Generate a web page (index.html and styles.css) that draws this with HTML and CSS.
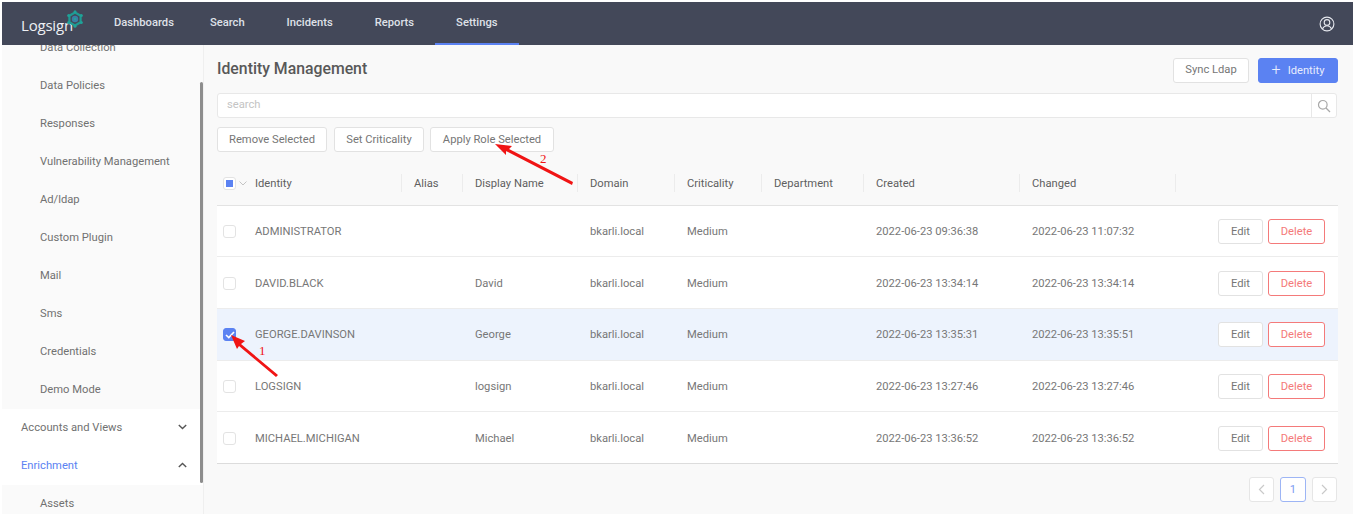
FILE: index.html
```html
<!DOCTYPE html>
<html lang="en">
<head>
<meta charset="utf-8">
<title>Identity Management</title>
<link rel="stylesheet" href="styles.css">
</head>
<body>
<div class="app">
  <header class="topbar">
    <div class="logo">
      <span class="logo-text">Logsign</span>
      <svg class="logo-mark" width="18" height="18" viewBox="0 0 18 18"><polygon points="9,2.500 14.600,5.700 14.600,12.300 9,15.500 3.400,12.300 3.400,5.700" fill="none" stroke="#1f9a92" stroke-width="2.200"/><g fill="#1fa298"><circle cx="9" cy="1.800" r="1.500"/><circle cx="15.300" cy="5.400" r="1.500"/><circle cx="15.300" cy="12.600" r="1.500"/><circle cx="9" cy="16.200" r="1.500"/><circle cx="2.700" cy="12.600" r="1.500"/><circle cx="2.700" cy="5.400" r="1.500"/></g><circle cx="9" cy="9" r="3.200" fill="#3a7ea6"/><circle cx="9" cy="9" r="1.300" fill="#1fa298"/></svg>
    </div>
    <nav class="nav">
      <a class="nav-item">Dashboards</a>
      <a class="nav-item">Search</a>
      <a class="nav-item">Incidents</a>
      <a class="nav-item">Reports</a>
      <a class="nav-item active">Settings</a>
    </nav>
    <svg class="user-icon" width="16" height="16" viewBox="0 0 16 16" fill="none" stroke="#e6e8ee" stroke-width="1.1"><circle cx="8" cy="8" r="6.9"/><circle cx="8" cy="6.400" r="2.800"/><path d="M3.400 13c1-2.300 2.700-3.300 4.600-3.300s3.600 1 4.600 3.300"/></svg>
  </header>
  <div class="body">
    <aside class="sidebar">
      <ul class="side-list">
        <li class="sub">Data Collection</li>
        <li class="sub">Data Policies</li>
        <li class="sub">Responses</li>
        <li class="sub">Vulnerability Management</li>
        <li class="sub">Ad/ldap</li>
        <li class="sub">Custom Plugin</li>
        <li class="sub">Mail</li>
        <li class="sub">Sms</li>
        <li class="sub">Credentials</li>
        <li class="sub">Demo Mode</li>
        <li class="parent">Accounts and Views
          <svg width="9" height="6" viewBox="0 0 9 6" fill="none" stroke="#555" stroke-width="1.400"><path d="M.8 1l3.700 3.500L8.200 1"/></svg></li>
        <li class="parent open">Enrichment
          <svg width="9" height="6" viewBox="0 0 9 6" fill="none" stroke="#555" stroke-width="1.400"><path d="M.8 5l3.700-3.500L8.200 5"/></svg></li>
        <li class="sub">Assets</li>
      </ul>
      <div class="scroll-thumb"></div>
    </aside>
    <main class="main">
      <div class="title-row">
        <h1 class="title">Identity Management</h1>
        <div class="title-actions">
          <button class="btn sync">Sync Ldap</button>
          <button class="btn primary"><span class="plus">+</span>Identity</button>
        </div>
      </div>
      <div class="search">
        <span class="search-input">search</span>
        <span class="search-btn"><svg width="14" height="14" viewBox="0 0 14 14" fill="none" stroke="#a8a8a8" stroke-width="1.200"><circle cx="5.800" cy="5.800" r="4.300"/><path d="M9 9l4 4"/></svg></span>
      </div>
      <div class="bulk">
        <button class="btn bulk-remove">Remove Selected</button>
        <button class="btn bulk-crit">Set Criticality</button>
        <button class="btn bulk-role">Apply Role Selected</button>
      </div>
      <table class="grid">
        <colgroup>
          <col class="c-check"><col class="c-identity"><col class="c-alias"><col class="c-display"><col class="c-domain"><col class="c-crit"><col class="c-dept"><col class="c-date"><col class="c-date"><col class="c-actions">
        </colgroup>
        <thead>
          <tr>
            <th class="check-cell"><span class="box partial"><i></i></span><svg class="caret" width="8" height="5" viewBox="0 0 8 5" fill="none" stroke="#c4c4c4"><path d="M.5.500L4 4 7.500.500"/></svg></th>
            <th>Identity</th><th>Alias</th><th>Display Name</th><th>Domain</th><th>Criticality</th><th>Department</th><th>Created</th><th>Changed</th><th></th>
          </tr>
        </thead>
        <tbody>
          <tr class="r1">
            <td class="check-cell"><span class="box"></span></td>
            <td>ADMINISTRATOR</td><td></td><td></td><td>bkarli.local</td><td>Medium</td><td></td><td>2022-06-23 09:36:38</td><td>2022-06-23 11:07:32</td>
            <td class="actions"><button class="btn small">Edit</button><button class="btn small danger">Delete</button></td>
          </tr>
          <tr class="r2">
            <td class="check-cell"><span class="box"></span></td>
            <td>DAVID.BLACK</td><td></td><td>David</td><td>bkarli.local</td><td>Medium</td><td></td><td>2022-06-23 13:34:14</td><td>2022-06-23 13:34:14</td>
            <td class="actions"><button class="btn small">Edit</button><button class="btn small danger">Delete</button></td>
          </tr>
          <tr class="r3 selected">
            <td class="check-cell"><span class="box checked"><svg width="10" height="8" viewBox="0 0 10 8" fill="none" stroke="#fff" stroke-width="1.600"><path d="M1 4l2.800 2.600L9 1"/></svg></span></td>
            <td>GEORGE.DAVINSON</td><td></td><td>George</td><td>bkarli.local</td><td>Medium</td><td></td><td>2022-06-23 13:35:31</td><td>2022-06-23 13:35:51</td>
            <td class="actions"><button class="btn small">Edit</button><button class="btn small danger">Delete</button></td>
          </tr>
          <tr class="r4">
            <td class="check-cell"><span class="box"></span></td>
            <td>LOGSIGN</td><td></td><td>logsign</td><td>bkarli.local</td><td>Medium</td><td></td><td>2022-06-23 13:27:46</td><td>2022-06-23 13:27:46</td>
            <td class="actions"><button class="btn small">Edit</button><button class="btn small danger">Delete</button></td>
          </tr>
          <tr class="r5">
            <td class="check-cell"><span class="box"></span></td>
            <td>MICHAEL.MICHIGAN</td><td></td><td>Michael</td><td>bkarli.local</td><td>Medium</td><td></td><td>2022-06-23 13:36:52</td><td>2022-06-23 13:36:52</td>
            <td class="actions"><button class="btn small">Edit</button><button class="btn small danger">Delete</button></td>
          </tr>
        </tbody>
      </table>
      <div class="pager">
        <span class="page"><svg width="7" height="11" viewBox="0 0 7 11" fill="none" stroke="#c9c9c9" stroke-width="1.200"><path d="M6 1L1.500 5.500 6 10"/></svg></span>
        <span class="page current">1</span>
        <span class="page"><svg width="7" height="11" viewBox="0 0 7 11" fill="none" stroke="#c9c9c9" stroke-width="1.200"><path d="M1 1l4.500 4.500L1 10"/></svg></span>
      </div>
    </main>
  </div>
  <svg class="annotations" width="1353" height="519" viewBox="0 0 1353 519">
    <g fill="#f01414" stroke="none">
      <polygon points="231,335 245,341 241,344 278,375 276,377 239,346 237,349"/>
      <polygon points="495,144 512,146 509,149 573,182 572,185 506,151 506,155"/>
    </g>
    <text class="anno-num" x="259" y="355">1</text>
    <text class="anno-num" x="540" y="163">2</text>
  </svg>
</div>
</body>
</html>
```
FILE: styles.css
```css
* { box-sizing: border-box; }
html, body { margin: 0; height: 100%; background: #fff; }
body { overflow: hidden; font-family: Roboto, "Liberation Sans", sans-serif; font-size: 11.2px; color: #666; }
.app { position: relative; width: 1353px; height: 519px; padding: 2px 0 5px 2px; display: flex; flex-direction: column; }
.topbar { height: 43px; flex: none; background: #434859; display: flex; align-items: center; padding-left: 19px; padding-right: 18px; position: relative; z-index: 2; }
.logo { position: relative; width: 75px; flex: none; padding-top: 3px; }
.logo-text { color: #eef0f4; font-family: "Open Sans", sans-serif; font-size: 15px; line-height: 18px; font-weight: 400; letter-spacing: -.2px; }
.logo-mark { position: absolute; left: 45px; top: -3px; }
.nav { display: flex; height: 100%; flex: 1; margin-left: -3px; }
.nav-item { display: flex; align-items: center; color: #dfe1e8; font-weight: 500; padding: 0 21px; border-bottom: 2px solid transparent; }
.nav-item:first-child { padding-right: 15px; }
.nav-item.active { border-bottom-color: #5b82f2; }
.user-icon { flex: none; }
.body { flex: 1; min-height: 0; display: flex; }
.sidebar { width: 202px; flex: none; background: #fff; overflow: hidden; position: relative; border-right: 1px solid #efefef; }
.side-list { list-style: none; margin: -16px 0 0; padding: 0; }
.side-list li { height: 38px; display: flex; align-items: center; padding-bottom: 2px; }
.sub { background: #fafafa; padding-left: 38px; color: #717171; }
.side-list .parent { background: #fff; padding: 0 16px 2px 19px; justify-content: space-between; color: #717171; }
.side-list .parent.open { color: #5b82f2; }
.scroll-thumb { position: absolute; left: 198px; top: 37px; width: 3px; height: 401px; background: #8d8d8d; border-radius: 2px; }
.main { flex: 1; min-width: 0; background: #f9f9f9; padding: 13px 15px 0 13px; }
.title-row { display: flex; justify-content: space-between; align-items: flex-start; height: 25px; margin-bottom: 10px; }
.title { margin: 0; font-size: 15.800px; line-height: 22px; font-weight: 500; color: #585858; }
.title-actions { display: flex; gap: 9px; }
.btn { font: inherit; color: #767676; background: #fff; border: 1px solid #e2e2e2; border-radius: 3px; height: 25px; padding: 0 12px; }
.btn.sync { width: 76px; padding: 0 0 2px; }
.btn.primary { width: 80px; background: #5b82f2; border-color: #5b82f2; color: #e8edfd; padding: 0 0 2px; }
.plus { font-size: 16px; font-weight: 300; margin-right: 7px; line-height: 1; vertical-align: -1px; }
.search { display: flex; height: 25px; margin-right: 1px; background: #fff; border: 1px solid #e8e8e8; border-radius: 3px; }
.search-input { flex: 1; color: #c4c4c4; padding-left: 9px; line-height: 22px; }
.search-btn { width: 25px; display: flex; align-items: center; justify-content: center; border-left: 1px solid #e8e8e8; }
.bulk { display: flex; gap: 7px; margin-top: 9px; }
.bulk .btn { height: 25px; }
.bulk-remove { width: 110px; padding: 0; }
.bulk .bulk-crit { width: 90px; padding: 0; margin-right: -1px; }
.bulk-role { width: 124px; padding: 0; }
.grid { table-layout: fixed; border-collapse: collapse; width: 1121px; margin-top: 7px; }
.grid tbody tr { background: #fff; }
.c-check { width: 25px; } .c-identity { width: 159px; } .c-alias { width: 61px; } .c-display { width: 115px; } .c-domain { width: 97px; } .c-crit { width: 87px; } .c-dept { width: 102px; } .c-date { width: 156px; } .c-actions { width: 163px; }
.grid th { height: 46px; font-weight: 400; text-align: left; padding: 3px 0 0 13px; color: #5f5f5f; border-bottom: 1px solid #e3e3e3; position: relative; }
.grid th + th + th::before, .grid th:last-child::before { content: ""; position: absolute; left: 0; top: 15px; height: 18px; width: 1px; background: #ececec; }
.grid td { padding: 1px 0 0 13px; height: 51.700px; border-bottom: 1px solid #ececec; color: #777; }
.grid tbody tr:last-child td { border-bottom-color: #dcdcdc; }
.grid .check-cell { padding: 1px 0 0 6px; white-space: nowrap; }
.grid th.check-cell { padding-top: 2px; }
.grid .selected td { background: #edf3fd; }
.box { display: inline-flex; align-items: center; justify-content: center; width: 13px; height: 13px; background: #fff; border: 1px solid #e3e3e3; border-radius: 3px; vertical-align: middle; }
.box.partial i { display: block; width: 7px; height: 7px; background: #5b82f2; }
.box.checked { background: #5b82f2; border-color: #5b82f2; }
.caret { margin-left: 3px; vertical-align: middle; }
.actions { white-space: nowrap; }
.grid .actions { padding: 1px 13px 0 0; text-align: right; }
.btn.small { height: 25px; width: 45px; padding: 0; }
.btn.small.danger { width: 57px; margin-left: 5px; color: #f47a7a; border-color: #f47a7a; }
.pager { display: flex; justify-content: flex-end; gap: 6px; margin-top: 13px; margin-right: 1px; }
.page { width: 25px; height: 25px; display: flex; align-items: center; justify-content: center; background: #fff; border: 1px solid #e6e6e6; border-radius: 3px; }
.page.current { width: 26px; border-color: #9db5f5; color: #7d9bf2; }
.annotations { position: absolute; left: 0; top: 0; pointer-events: none; z-index: 3; }
.anno-num { fill: #f01414; font-family: "Liberation Serif", serif; font-size: 13px; }
```
